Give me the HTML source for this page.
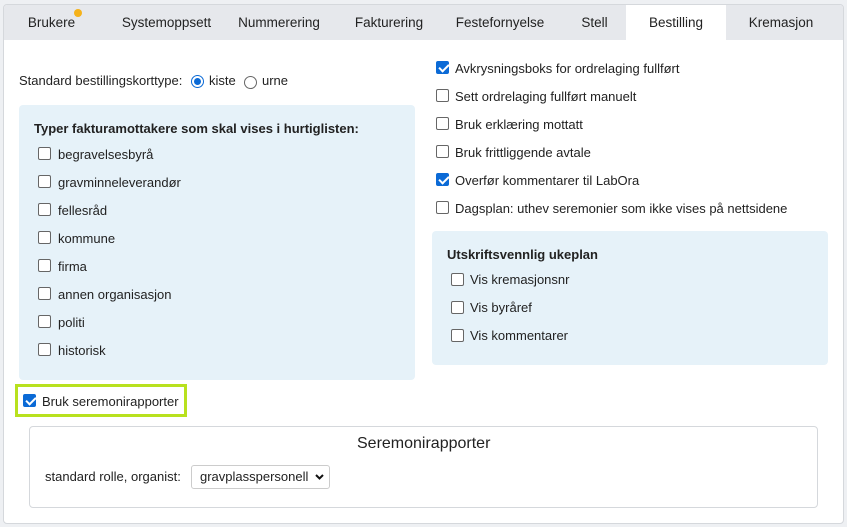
<!DOCTYPE html>
<html><head><meta charset="utf-8"><style>
*{box-sizing:border-box;margin:0;padding:0}
body{width:847px;height:527px;background:#eef0f3;font-family:"Liberation Sans",Arial,sans-serif;font-size:13px;color:#222;position:relative;overflow:hidden}
.card{position:absolute;left:3px;top:4px;width:841px;height:520px;background:#fff;border:1px solid #d5d8dc;border-radius:4px;overflow:hidden}
.tabs{position:absolute;left:0;top:0;width:100%;height:35px;background:#e6e8ec}
.tab{position:absolute;top:0;height:35px;line-height:35px;font-size:13.5px;color:#222;text-align:center}
.tab.act{background:#fff}
.a{position:absolute;white-space:nowrap}
.cb{position:absolute;width:13px;height:13px;border:1px solid #666;border-radius:2px;background:#fff}
.cb.on{background:#0b6ad6;border-color:#0b6ad6}
.cb.on::after{content:"";position:absolute;left:3.5px;top:0px;width:4px;height:8px;border:solid #fff;border-width:0 2px 2px 0;transform:rotate(45deg)}
.box{position:absolute;background:#e6f2f9;border-radius:4px}
.lbl{position:absolute;white-space:nowrap;font-size:13px}
</style></head><body>
<div class="card">
<div class="tabs">
<div class="tab" style="left:0;width:95px">Brukere<span style="position:absolute;left:70px;top:4px;width:8px;height:8px;border-radius:50%;background:#f5b21a"></span></div>
<div class="tab" style="left:95px;width:135px">Systemoppsett</div>
<div class="tab" style="left:220px;width:110px">Nummerering</div>
<div class="tab" style="left:335px;width:100px">Fakturering</div>
<div class="tab" style="left:446px;width:100px">Festefornyelse</div>
<div class="tab" style="left:560px;width:61px">Stell</div>
<div class="tab act" style="left:622px;width:100px">Bestilling</div>
<div class="tab" style="left:722px;width:110px">Kremasjon</div>
</div>
</div>
<div class="lbl" style="left:19px;top:73px">Standard bestillingskorttype:</div>
<div class="a" style="left:191px;top:75px;width:13px;height:13px;border-radius:50%;border:1px solid #0b6ad6;background:#fff"><div style="position:absolute;left:2px;top:2px;width:7px;height:7px;border-radius:50%;background:#0b6ad6"></div></div>
<div class="lbl" style="left:209px;top:73px">kiste</div>
<div class="a" style="left:244px;top:76px;width:13px;height:13px;border-radius:50%;border:1px solid #666"></div>
<div class="lbl" style="left:262px;top:73px">urne</div>

<div class="box" style="left:19px;top:105px;width:396px;height:275px"></div>
<div class="lbl" style="left:34px;top:121px;font-weight:bold">Typer fakturamottakere som skal vises i hurtiglisten:</div>
<div class="cb" style="left:38px;top:147px"></div><div class="lbl" style="left:58px;top:147px">begravelsesbyrå</div>
<div class="cb" style="left:38px;top:175px"></div><div class="lbl" style="left:58px;top:175px">gravminneleverandør</div>
<div class="cb" style="left:38px;top:203px"></div><div class="lbl" style="left:58px;top:203px">fellesråd</div>
<div class="cb" style="left:38px;top:231px"></div><div class="lbl" style="left:58px;top:231px">kommune</div>
<div class="cb" style="left:38px;top:259px"></div><div class="lbl" style="left:58px;top:259px">firma</div>
<div class="cb" style="left:38px;top:287px"></div><div class="lbl" style="left:58px;top:287px">annen organisasjon</div>
<div class="cb" style="left:38px;top:315px"></div><div class="lbl" style="left:58px;top:315px">politi</div>
<div class="cb" style="left:38px;top:343px"></div><div class="lbl" style="left:58px;top:343px">historisk</div>

<div class="cb on" style="left:436px;top:61px"></div><div class="lbl" style="left:455px;top:61px">Avkrysningsboks for ordrelaging fullført</div>
<div class="cb" style="left:436px;top:89px"></div><div class="lbl" style="left:455px;top:89px">Sett ordrelaging fullført manuelt</div>
<div class="cb" style="left:436px;top:117px"></div><div class="lbl" style="left:455px;top:117px">Bruk erklæring mottatt</div>
<div class="cb" style="left:436px;top:145px"></div><div class="lbl" style="left:455px;top:145px">Bruk frittliggende avtale</div>
<div class="cb on" style="left:436px;top:173px"></div><div class="lbl" style="left:455px;top:173px">Overfør kommentarer til LabOra</div>
<div class="cb" style="left:436px;top:201px"></div><div class="lbl" style="left:455px;top:201px">Dagsplan: uthev seremonier som ikke vises på nettsidene</div>

<div class="box" style="left:432px;top:231px;width:396px;height:134px"></div>
<div class="lbl" style="left:447px;top:247px;font-weight:bold">Utskriftsvennlig ukeplan</div>
<div class="cb" style="left:451px;top:273px"></div><div class="lbl" style="left:470px;top:272px">Vis kremasjonsnr</div>
<div class="cb" style="left:451px;top:301px"></div><div class="lbl" style="left:470px;top:300px">Vis byråref</div>
<div class="cb" style="left:451px;top:329px"></div><div class="lbl" style="left:470px;top:328px">Vis kommentarer</div>

<div class="a" style="left:15px;top:384px;width:172px;height:33px;border:3px solid #b8e11e"></div>
<div class="cb on" style="left:23px;top:394px"></div><div class="lbl" style="left:42px;top:394px">Bruk seremonirapporter</div>

<div class="a" style="left:29px;top:426px;width:789px;height:82px;border:1px solid #d5d8dc;border-radius:4px"></div>
<div class="lbl" style="left:357px;top:435px;font-size:16px">Seremonirapporter</div>
<div class="lbl" style="left:45px;top:469px">standard rolle, organist:</div>
<div class="a" style="left:191px;top:465px;width:139px;height:24px;border:1px solid #ccc;border-radius:3px;font-size:13px;line-height:22px;padding-left:8px">gravplasspersonell<svg style="position:absolute;right:5px;top:8px" width="9" height="6" viewBox="0 0 9 6"><path d="M1 1L4.5 4.5L8 1" fill="none" stroke="#111" stroke-width="2"/></svg></div>
</body></html>
